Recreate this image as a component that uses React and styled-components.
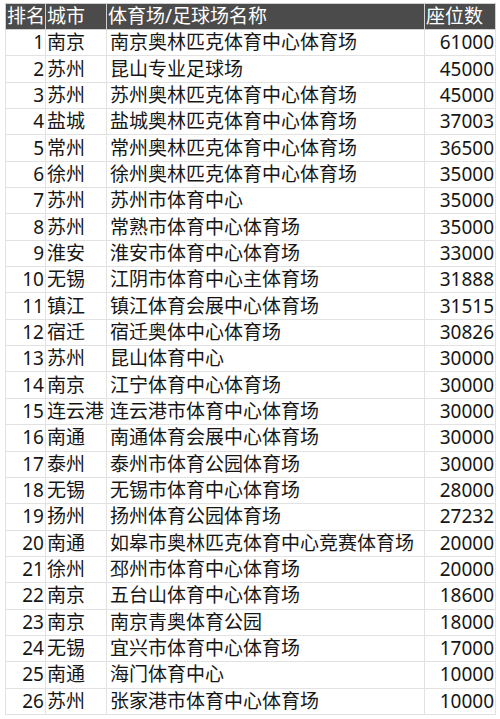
import styled, { createGlobalStyle } from 'styled-components';

const GlobalStyle = createGlobalStyle`
  body {
    margin: 0;
    background: #fff;
    font-family: "Noto Sans", "Noto Sans CJK SC", sans-serif;
  }
`;

const Page = styled.div`
  padding: 3px 5px 0 5px;
`;

const Table = styled.table`
  width: 490px;
  border-collapse: collapse;
  table-layout: fixed;
  font-size: 19px;
  color: #161616;
`;

const HeadCell = styled.th`
  height: 25px;
  padding: 0 1px;
  background-color: #4b4b4b;
  color: #fff;
  font-weight: 400;
  text-align: left;
  line-height: 25px;
  border: 1px solid #cfcfcf;
  white-space: nowrap;
  overflow: hidden;
`;

const Cell = styled.td`
  height: 25.35px;
  padding: 0 1px 0 ${(props) => props.pad || 1}px;
  text-align: ${(props) => (props.right ? 'right' : 'left')};
  line-height: 25px;
  border: 1px solid #e2e2e2;
  white-space: nowrap;
  overflow: hidden;
`;

const rows = [
  ['南京', '南京奥林匹克体育中心体育场', 61000],
  ['苏州', '昆山专业足球场', 45000],
  ['苏州', '苏州奥林匹克体育中心体育场', 45000],
  ['盐城', '盐城奥林匹克体育中心体育场', 37003],
  ['常州', '常州奥林匹克体育中心体育场', 36500],
  ['徐州', '徐州奥林匹克体育中心体育场', 35000],
  ['苏州', '苏州市体育中心', 35000],
  ['苏州', '常熟市体育中心体育场', 35000],
  ['淮安', '淮安市体育中心体育场', 33000],
  ['无锡', '江阴市体育中心主体育场', 31888],
  ['镇江', '镇江体育会展中心体育场', 31515],
  ['宿迁', '宿迁奥体中心体育场', 30826],
  ['苏州', '昆山体育中心', 30000],
  ['南京', '江宁体育中心体育场', 30000],
  ['连云港', '连云港市体育中心体育场', 30000],
  ['南通', '南通体育会展中心体育场', 30000],
  ['泰州', '泰州市体育公园体育场', 30000],
  ['无锡', '无锡市体育中心体育场', 28000],
  ['扬州', '扬州体育公园体育场', 27232],
  ['南通', '如皋市奥林匹克体育中心竞赛体育场', 20000],
  ['徐州', '邳州市体育中心体育场', 20000],
  ['南京', '五台山体育中心体育场', 18600],
  ['南京', '南京青奥体育公园', 18000],
  ['无锡', '宜兴市体育中心体育场', 17000],
  ['南通', '海门体育中心', 10000],
  ['苏州', '张家港市体育中心体育场', 10000],
];

export default function App() {
  return (
    <Page>
      <GlobalStyle />
      <Table>
        <colgroup>
          <col style={{ width: 40 }} />
          <col style={{ width: 61 }} />
          <col style={{ width: 318 }} />
          <col style={{ width: 71 }} />
        </colgroup>
        <thead>
          <tr>
            <HeadCell>排名</HeadCell>
            <HeadCell>城市</HeadCell>
            <HeadCell>体育场/足球场名称</HeadCell>
            <HeadCell>座位数</HeadCell>
          </tr>
        </thead>
        <tbody>
          {rows.map(([city, name, seats], i) => (
            <tr key={i}>
              <Cell right>{i + 1}</Cell>
              <Cell>{city}</Cell>
              <Cell pad={3}>{name}</Cell>
              <Cell right>{seats}</Cell>
            </tr>
          ))}
        </tbody>
      </Table>
    </Page>
  );
}
